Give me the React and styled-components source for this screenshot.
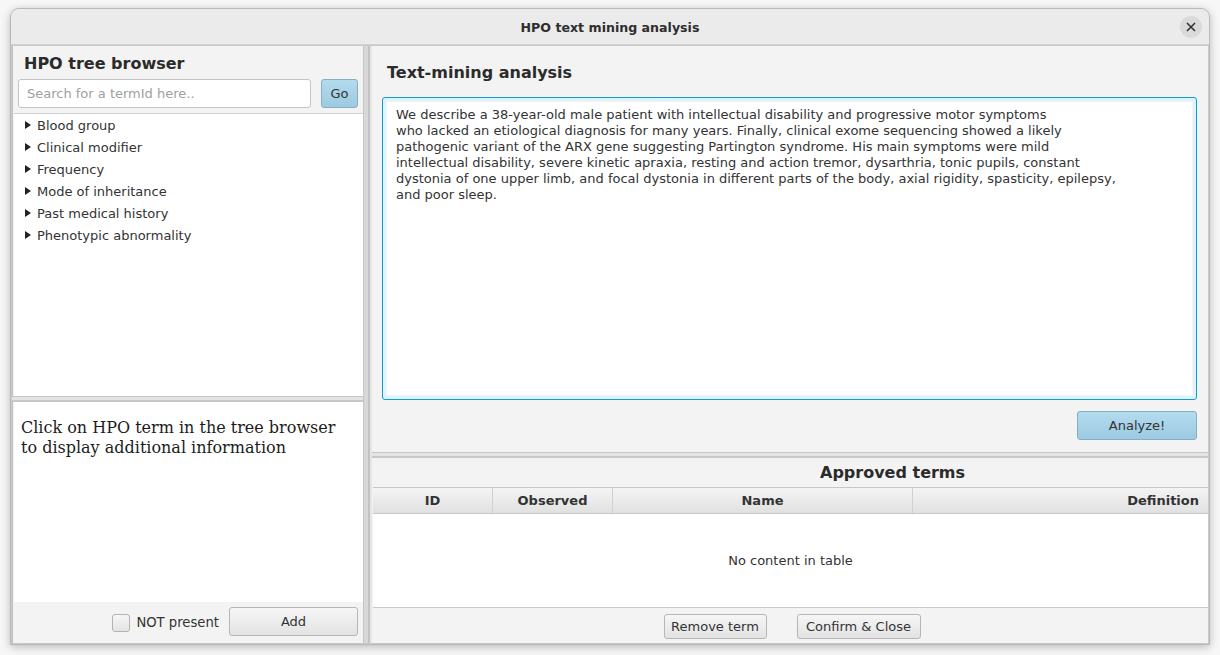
import React from "react"
import styled, { createGlobalStyle } from "styled-components"

const GlobalStyle = createGlobalStyle`
    html, body {
        margin: 0;
        padding: 0;
        background: #f7f7f7;
        font-family: "DejaVu Sans", "Liberation Sans", sans-serif;
    }
    * {
        box-sizing: border-box;
    }
`

const Page = styled.div`
    width: 1220px;
    height: 655px;
    padding: 8px 10px 10px 10px;
    overflow: hidden;
`

const Window = styled.div`
    display: flex;
    flex-direction: column;
    height: 100%;
    border: 1px solid #b9b9b9;
    border-radius: 9px 9px 0 0;
    box-shadow: 0 2px 8px rgba(0, 0, 0, 0.25);
    background: #c6c6c6;
    overflow: hidden;
`

const TitleBar = styled.div`
    position: relative;
    display: flex;
    align-items: center;
    justify-content: center;
    height: 36px;
    flex-shrink: 0;
    padding-top: 2px;
    background: #ebebeb;
    border-bottom: 1px solid #d2d2d2;
    font-family: "DejaVu Sans", sans-serif;
    font-weight: 700;
    font-size: 12.6px;
    color: #2e2e2e;
`

const CloseButton = styled.div`
    position: absolute;
    right: 7px;
    top: 7px;
    width: 22px;
    height: 22px;
    border-radius: 50%;
    background: #dadada;
    display: flex;
    align-items: center;
    justify-content: center;
`

const Body = styled.div`
    flex: 1;
    display: flex;
    min-height: 0;
    padding: 1px;
    background: #c9c9c9;
`

const LeftPane = styled.div`
    width: 351px;
    display: flex;
    flex-direction: column;
    flex-shrink: 0;
`

const VDivider = styled.div`
    width: 9px;
    flex-shrink: 0;
    background: linear-gradient(to right, #c6c6c6 0 1px, #d8d8d8 1px 5px, #c2c2c2 5px 7px, #e6e6e6 7px);
`

const HDivider = styled.div`
    height: 6px;
    flex-shrink: 0;
    background: linear-gradient(to bottom, #c6c6c6 0 1px, #e4e4e4 1px 4px, #c8c8c8 4px);
`

const TreeSection = styled.div`
    height: 350px;
    display: flex;
    flex-direction: column;
    background: #f3f3f3;
    border-left: 1px solid #c2c2c2;
`

const SectionTitle = styled.div`
    font-weight: 700;
    font-size: 16px;
    color: #2b2b2b;
    padding: ${p => p.$pad || "8px 0 0 11px"};
    height: ${p => p.$h || "auto"};
`

const SearchRow = styled.div`
    display: flex;
    gap: 10px;
    padding: 6px 5px 5px 5px;
`

const SearchInput = styled.div`
    flex: 1;
    height: 29px;
    background: #fff;
    border: 1px solid #c4c4c4;
    border-radius: 3px;
    display: flex;
    align-items: center;
    padding-left: 8px;
    font-size: 13px;
    color: #a0a0a0;
`

const Button = styled.div`
    display: flex;
    align-items: center;
    justify-content: center;
    height: ${p => p.$h || 29}px;
    width: ${p => p.$w}px;
    border: 1px solid ${p => (p.$blue ? "#86afc6" : "#b6b6b6")};
    border-radius: 3px;
    background: ${p =>
        p.$blue
            ? "linear-gradient(to bottom, #b3dbee, #9dcae2)"
            : "linear-gradient(to bottom, #f6f6f6, #e3e3e3)"};
    font-size: 13px;
    color: #333;
    flex-shrink: 0;
`

const TreeList = styled.div`
    flex: 1;
    background: #fff;
    border-top: 1px solid #d0d0d0;
    margin-left: 1px;
`

const TreeItem = styled.div`
    display: flex;
    align-items: center;
    height: 22px;
    padding-left: 11px;
    font-size: 13px;
    color: #333;
    gap: 4px;
`

const Arrow = styled.span`
    width: 0;
    height: 0;
    border-top: 4.5px solid transparent;
    border-bottom: 4.5px solid transparent;
    border-left: 6px solid #222;
    margin-right: 2px;
`

const InfoSection = styled.div`
    flex: 1;
    display: flex;
    flex-direction: column;
    background: #f3f3f3;
    border-left: 1px solid #c2c2c2;
`

const InfoText = styled.div`
    flex: 1;
    background: #fff;
    margin-left: 1px;
    padding: 16px 7px 0 7px;
    font-family: "DejaVu Serif", "Liberation Serif", serif;
    font-size: 16px;
    line-height: 20px;
    color: #1c1c1c;
`

const InfoFooter = styled.div`
    height: 41px;
    display: flex;
    align-items: center;
    justify-content: flex-end;
    gap: 10px;
    padding: 0 5px 2px 0;
`

const CheckLabel = styled.label`
    display: flex;
    align-items: center;
    gap: 6px;
    font-size: 13.2px;
    color: #333;
    padding-top: 2px;
`

const CheckBox = styled.span`
    width: 18px;
    height: 18px;
    border: 1px solid #b3b3b3;
    border-radius: 3px;
    background: linear-gradient(to bottom, #f6f6f6, #e4e4e4);
`

const RightPane = styled.div`
    flex: 1;
    display: flex;
    flex-direction: column;
    min-width: 0;
`

const AnalysisSection = styled.div`
    height: 406px;
    display: flex;
    flex-direction: column;
    background: #f3f3f3;
`

const TextArea = styled.div`
    margin: 8px 11px 0 10px;
    height: 303px;
    border: 1px solid #0a9ed3;
    border-radius: 3px;
    box-shadow: inset 0 0 0 3px #e1f2fa, inset 0 0 0 4px #edf7fc;
    background: #fff;
    padding: 9px 13px;
    font-size: 13px;
    line-height: 16px;
    color: #333;
    white-space: pre-line;
`

const ActionRow = styled.div`
    display: flex;
    justify-content: flex-end;
    padding: 11px 11px 0 0;
`

const ApprovedSection = styled.div`
    flex: 1;
    display: flex;
    flex-direction: column;
    background: #f3f3f3;
`

const Table = styled.div`
    flex: 1;
    display: flex;
    flex-direction: column;
    margin-left: 1px;
    background: #fff;
    border-top: 1px solid #c8c8c8;
    border-bottom: 1px solid #c8c8c8;
`

const HeaderRow = styled.div`
    display: grid;
    grid-template-columns: 120px 120px 300px 1fr;
    height: 26px;
    background: linear-gradient(to bottom, #f4f4f4, #e1e1e1);
    border-bottom: 1px solid #c8c8c8;
`

const HeaderCell = styled.div`
    display: flex;
    align-items: center;
    justify-content: ${p => p.$align || "center"};
    padding-right: ${p => (p.$align ? 9 : 0)}px;
    border-right: ${p => (p.$last ? "none" : "1px solid #d0d0d0")};
    font-weight: 700;
    font-size: 13px;
    color: #333;
`

const EmptyBody = styled.div`
    flex: 1;
    display: flex;
    align-items: center;
    justify-content: center;
    font-size: 13px;
    color: #333;
`

const BottomBar = styled.div`
    height: 35px;
    display: flex;
    align-items: center;
    justify-content: center;
    gap: 30px;
    padding: 2px 0 0 4px;
`

const treeItems = [
    "Blood group",
    "Clinical modifier",
    "Frequency",
    "Mode of inheritance",
    "Past medical history",
    "Phenotypic abnormality",
]

const abstractText = `We describe a 38-year-old male patient with intellectual disability and progressive motor symptoms
who lacked an etiological diagnosis for many years. Finally, clinical exome sequencing showed a likely
pathogenic variant of the ARX gene suggesting Partington syndrome. His main symptoms were mild
intellectual disability, severe kinetic apraxia, resting and action tremor, dysarthria, tonic pupils, constant
dystonia of one upper limb, and focal dystonia in different parts of the body, axial rigidity, spasticity, epilepsy,
and poor sleep.`

const App = () => {
    return (
        <Page>
            <GlobalStyle />
            <Window>
                <TitleBar>
                    HPO text mining analysis
                    <CloseButton>
                        <svg width="10" height="10" viewBox="0 0 10 10">
                            <path d="M1 1 L9 9 M9 1 L1 9" stroke="#2e2e2e" strokeWidth="1.5" />
                        </svg>
                    </CloseButton>
                </TitleBar>
                <Body>
                    <LeftPane>
                        <TreeSection>
                            <SectionTitle>HPO tree browser</SectionTitle>
                            <SearchRow>
                                <SearchInput>Search for a termId here..</SearchInput>
                                <Button $blue $w={37}>Go</Button>
                            </SearchRow>
                            <TreeList>
                                {treeItems.map(item => (
                                    <TreeItem key={item}>
                                        <Arrow />
                                        {item}
                                    </TreeItem>
                                ))}
                            </TreeList>
                        </TreeSection>
                        <HDivider />
                        <InfoSection>
                            <InfoText>
                                Click on HPO term in the tree browser
                                <br />
                                to display additional information
                            </InfoText>
                            <InfoFooter>
                                <CheckLabel>
                                    <CheckBox />
                                    NOT present
                                </CheckLabel>
                                <Button $w={129} $h={29}>Add</Button>
                            </InfoFooter>
                        </InfoSection>
                    </LeftPane>
                    <VDivider />
                    <RightPane>
                        <AnalysisSection>
                            <SectionTitle $pad="17px 0 0 15px" $h="43px">Text-mining analysis</SectionTitle>
                            <TextArea>{abstractText}</TextArea>
                            <ActionRow>
                                <Button $blue $w={120}>Analyze!</Button>
                            </ActionRow>
                        </AnalysisSection>
                        <HDivider />
                        <ApprovedSection>
                            <SectionTitle $pad="5px 0 0 448px" $h="29px">Approved terms</SectionTitle>
                            <Table>
                                <HeaderRow>
                                    <HeaderCell>ID</HeaderCell>
                                    <HeaderCell>Observed</HeaderCell>
                                    <HeaderCell>Name</HeaderCell>
                                    <HeaderCell $align="flex-end" $last>Definition</HeaderCell>
                                </HeaderRow>
                                <EmptyBody>No content in table</EmptyBody>
                            </Table>
                            <BottomBar>
                                <Button $w={103} $h={25}>Remove term</Button>
                                <Button $w={124} $h={25}>Confirm &amp; Close</Button>
                            </BottomBar>
                        </ApprovedSection>
                    </RightPane>
                </Body>
            </Window>
        </Page>
    )
}

export default App
